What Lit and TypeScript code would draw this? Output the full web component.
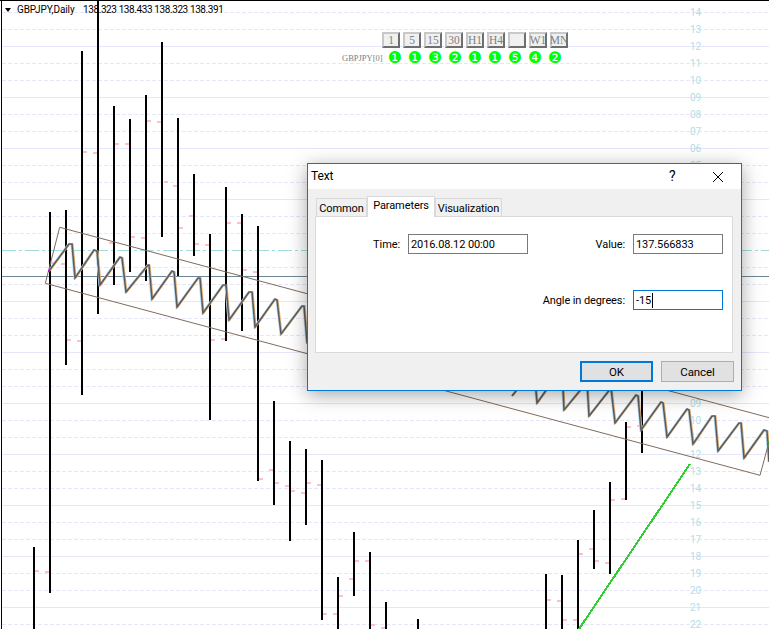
import { LitElement, html, css, svg } from "lit";
import { customElement } from "lit/decorators.js";

const GRID_START = 12;
const GRID_STEP = 17;
const GRID_COUNT = 37;

const BARS: [number, number, number][] = [
  [34, 547, 629], [50, 212, 593], [66, 210, 365], [82, 51, 395], [98, 0, 314], [114, 106, 285],
  [130, 119, 272], [146, 95, 281], [162, 42, 237], [178, 118, 276], [194, 174, 256], [210, 234, 420],
  [226, 187, 341], [242, 214, 331], [258, 226, 481], [274, 401, 505], [290, 441, 541], [306, 449, 525],
  [322, 460, 620], [338, 577, 629], [354, 532, 596], [370, 552, 629], [386, 602, 629], [418, 619, 629],
  [546, 574, 629], [562, 575, 629], [578, 540, 629], [594, 510, 569], [610, 482, 574], [626, 422, 500],
  [642, 380, 453],
];

const DOJI: [number, number][] = [
  [35, 570], [45, 571], [51, 262], [61, 263], [67, 339], [77, 340], [83, 151], [93, 152], [99, 283], [109, 242],
  [115, 143], [125, 143], [131, 236], [141, 237], [147, 120], [157, 121], [164, 181], [173, 185], [179, 227],
  [189, 215], [195, 243], [205, 244], [211, 339], [221, 338], [227, 222], [237, 222], [243, 269], [253, 271],
  [259, 478], [269, 469], [275, 482], [285, 485], [291, 490], [301, 492], [307, 482], [317, 484], [323, 613],
  [333, 613], [339, 595], [349, 578], [355, 560], [365, 560], [371, 624], [381, 627], [547, 599], [557, 600],
  [563, 619], [573, 619], [579, 553], [589, 548], [595, 560], [605, 562], [611, 499], [621, 498], [627, 426], [637, 425],
];

const ZIG_A = "49,271 69,244 72,244 75,278 94,250 97,251 100,285 120,257 122,258 126,292 148,265 149,265 152,299 172,271 174,272 177,307 198,278 200,278 203,313 223,285 226,285 229,320 249,292 252,292 255,327 275,299 277,300 281,334 302,306 304,306 307,342 325,318";
const ZIG_B = "512,396 534,368 537,403 562,368 564,410 587,382 589,416 611,388 615,423 636,395 638,396 641,430 661,402 663,403 667,437 687,409 689,410 693,444 712,416 715,416 718,451 739,423 741,423 744,458 764,430 767,431 769,462";

const TIMEFRAMES = ["1", "5", "15", "30", "H1", "H4", "", "W1", "MN"];
const COUNTS = ["❶", "❶", "❸", "❷", "❶", "❶", "❺", "❹", "❷"];

function pad(n: number) {
  return String(n).padStart(2, "0");
}

@customElement("chart-canvas")
class ChartCanvas extends LitElement {
  static styles = css`
    :host { display: block; width: 769px; height: 629px; }
    svg { display: block; }
    .solid { stroke: #e6e6fa; stroke-width: 1; }
    .dash { stroke: #e6e6fa; stroke-width: 1; stroke-dasharray: 4 2; }
    .teal { stroke: #a3dcdc; stroke-width: 1; stroke-dasharray: 14 3 3 3; }
    .now { stroke: #6f8596; stroke-width: 1; }
    .bar { fill: #000; }
    .doji { fill: #ffc0cb; }
    .scale { fill: #b0e0e6; font: 10px "Roboto", sans-serif; letter-spacing: -0.2px; }
    .edge { fill: #000; }
    .channel { fill: none; stroke: #7f6c5e; stroke-width: 1; }
    .zig { fill: none; stroke: #5c5c5c; stroke-width: 1.6; }
    .zig-warm { fill: none; stroke: #e8b070; stroke-width: 1.2; }
    .zig-cool { fill: none; stroke: #b4dcf4; stroke-width: 1.2; }
    .trend { stroke: #32cd32; stroke-width: 2; shape-rendering: crispEdges; }
    .mark-a { fill: #c000f0; }
    .mark-b { fill: #00c000; }
  `;

  render() {
    const rows = Array.from({ length: GRID_COUNT }, (_, k) => k);
    const labelled = rows.filter((k) => k <= 9 || k >= 23);
    return html`<svg width="769" height="629" viewBox="0 0 769 629">
      <rect width="769" height="629" fill="#fff"></rect>
      ${rows.map((k) => {
        const y = GRID_START + GRID_STEP * k + 0.5;
        const cls = k === 14 ? "teal" : k % 3 === 2 ? "solid" : "dash";
        return svg`<line class=${cls} x1="2" x2="769" y1=${y} y2=${y}></line>`;
      })}
      <line class="now" x1="2" x2="769" y1="276.5" y2="276.5"></line>
      ${labelled.map((k) => {
        const y = GRID_START + GRID_STEP * k + 4;
        const label = pad(Math.abs(14 - k));
        return svg`<text class="scale" x="690" y=${y}>${label}</text>`;
      })}
      ${DOJI.map(([x, y]) => svg`<rect class="doji" x=${x} y=${y} width="4" height="2"></rect>`)}
      ${BARS.map(([x, a, b]) => svg`<rect class="bar" x=${x - 1} y=${a} width="2" height=${b - a}></rect>`)}
      <polyline class="zig-warm" points=${ZIG_A} transform="translate(1 0)"></polyline>
      <polyline class="zig-cool" points=${ZIG_A} transform="translate(-1 0)"></polyline>
      <polyline class="zig" points=${ZIG_A}></polyline>
      <polyline class="zig-warm" points=${ZIG_B} transform="translate(1 0)"></polyline>
      <polyline class="zig-cool" points=${ZIG_B} transform="translate(-1 0)"></polyline>
      <polyline class="zig" points=${ZIG_B}></polyline>
      <polyline class="channel" points="774,419 59.7,227.3 45.3,283.3 760,475.3 769,442"></polyline>
      <line class="trend" x1="579" y1="629" x2="690" y2="464"></line>
      <rect class="mark-a" x="48" y="270" width="2" height="2"></rect>
      <rect class="mark-b" x="767" y="441" width="2" height="2"></rect>
      <rect class="edge" x="0" y="0" width="769" height="1"></rect>
      <rect class="edge" x="1" y="0" width="1" height="629"></rect>
    </svg>`;
  }
}

@customElement("chart-overlay")
class ChartOverlay extends LitElement {
  static styles = css`
    :host { display: block; position: absolute; inset: 0; pointer-events: none; }
    .head {
      position: absolute; left: 5px; top: 3px; display: flex; align-items: center;
      font: 10px/14px "Roboto", sans-serif; color: #000; white-space: pre;
    }
    .tri { width: 0; height: 0; border: 3px solid transparent; border-top: 4px solid #000; border-bottom: 0; margin-right: 6px; }
    .name { width: 66px; letter-spacing: -0.1px; }
    .prices { letter-spacing: -0.4px; }
    .tf { position: absolute; left: 382px; top: 32px; display: flex; gap: 3px; }
    .btn {
      box-sizing: border-box; width: 18px; height: 16px; background: #f0f0f0;
      border: 2px solid; border-color: #c8c8c8 #6e6e6e #6e6e6e #c8c8c8;
      font: 11.5px/12px "Liberation Serif", serif; color: #808080;
      display: flex; align-items: center; justify-content: center; white-space: nowrap;
    }
    .status { position: absolute; left: 342px; top: 51px; display: flex; align-items: center; }
    .sym { width: 43px; font: 8.5px/14px "Liberation Serif", serif; color: #808080; }
    .counts { display: flex; }
    .c { width: 20px; text-align: center; font: 16px/14px "DejaVu Sans", sans-serif; color: #00ff00; }
  `;
  render() {
    return html`
      <div class="head"><span class="tri"></span><span class="name">GBPJPY,Daily</span><span class="prices">138.323 138.433 138.323 138.391</span></div>
      <div class="tf">${TIMEFRAMES.map((t) => html`<div class="btn">${t}</div>`)}</div>
      <div class="status"><span class="sym">GBPJPY[0]</span><div class="counts">${COUNTS.map((c) => html`<span class="c">${c}</span>`)}</div></div>
    `;
  }
}

@customElement("text-dialog")
class TextDialog extends LitElement {
  static styles = css`
    :host {
      display: block; position: absolute; left: 307px; top: 163px; width: 435px; height: 228px;
      box-sizing: border-box; border: 1px solid #0078d7; background: #f0f0f0;
      box-shadow: 0 4px 18px rgba(0,0,0,.35);
      font: 11px/16px "Roboto", sans-serif; letter-spacing: -0.1px; color: #000;
    }
    .title { height: 25px; background: #fff; display: flex; align-items: center; padding: 0 18px 2px 3px; box-sizing: border-box; }
    .title .t { flex: 1; font-size: 12px; }
    .q { width: 44px; font-size: 14px; }
    .x { width: 10px; height: 10px; display: flex; margin-top: 2px; }
    .tabs { display: flex; align-items: flex-end; height: 28px; padding-left: 8px; box-sizing: border-box; margin-bottom: -1px; position: relative; }
    .tab {
      box-sizing: border-box; height: 18px; margin-bottom: 1px; border: 1px solid #d9d9d9; border-bottom: 0; background: #f0f0f0;
      text-align: center; line-height: 19px;
    }
    .tab.common { width: 51px; }
    .tab.params { width: 68px; height: 21px; margin-bottom: 0; background: #fff; line-height: 17px; }
    .tab.visual { width: 67px; }
    .panel {
      box-sizing: border-box; margin-left: 7px; width: 418px; height: 137px; background: #fff; border: 1px solid #d9d9d9;
      display: grid; grid-template-columns: 92px 120px 105px 90px; grid-template-rows: 20px 20px;
      row-gap: 36px; padding-top: 17px; align-items: center;
    }
    label { text-align: right; padding: 2px 8px 0 0; white-space: nowrap; }
    .input {
      box-sizing: border-box; height: 20px; border: 1px solid #7a7a7a; padding: 0 2px; line-height: 19px; background: #fff;
    }
    .input.focus { border-color: #0078d7; display: flex; align-items: center; }
    .caret { width: 1px; height: 15px; background: #000; margin-left: 1px; }
    .actions { display: flex; justify-content: flex-end; gap: 8px; padding: 8px 7px 0 0; }
    .b {
      box-sizing: border-box; width: 73px; height: 21px; background: #e1e1e1; border: 1px solid #adadad;
      text-align: center; line-height: 20px; font-size: 11.5px;
    }
    .b.def { border: 2px solid #0078d7; line-height: 18px; }
  `;
  render() {
    return html`
      <div class="title"><span class="t">Text</span><span class="q">?</span>
        <span class="x"><svg width="10" height="10" viewBox="0 0 10 10"><path d="M0 0L10 10M10 0L0 10" stroke="#000" stroke-width="1" fill="none"></path></svg></span></div>
      <div class="tabs">
        <div class="tab common">Common</div>
        <div class="tab params">Parameters</div>
        <div class="tab visual">Visualization</div>
      </div>
      <div class="panel">
        <label>Time:</label><div class="input">2016.08.12 00:00</div>
        <label>Value:</label><div class="input">137.566833</div>
        <span></span><span></span>
        <label>Angle in degrees:</label><div class="input focus">-15<span class="caret"></span></div>
      </div>
      <div class="actions"><div class="b def">OK</div><div class="b">Cancel</div></div>
    `;
  }
}

@customElement("app-root")
export class AppRoot extends LitElement {
  static styles = css`
    :host { display: block; position: relative; width: 769px; height: 629px; overflow: hidden; background: #fff; }
  `;
  render() {
    return html`<chart-canvas></chart-canvas><chart-overlay></chart-overlay><text-dialog></text-dialog>`;
  }
}
